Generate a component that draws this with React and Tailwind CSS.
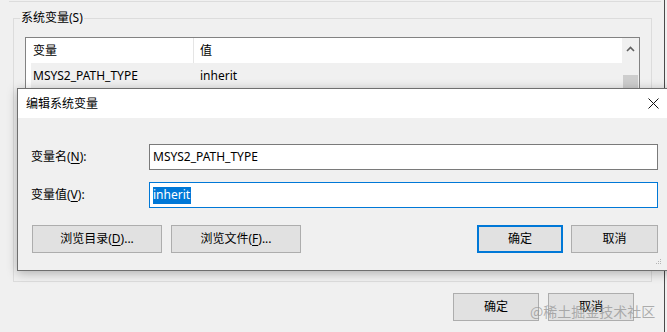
import React from "react";

const font = { fontFamily: '"Noto Sans", "Noto Sans CJK SC", sans-serif' };

const WinButton = ({ children, primary, className = "" }) => (
  <div
    className={`flex h-[28px] items-center justify-center bg-[#e1e1e1] text-[12px] text-black ${
      primary ? "border-2 border-[#0078d7]" : "border border-[#adadad]"
    } ${className}`}
  >
    {children}
  </div>
);

const Grip = () => (
  <svg width="6" height="6" viewBox="0 0 6 6" className="absolute bottom-[2px] right-[2px]">
    <rect x="4" y="0" width="1" height="1" fill="#b4b4b4" />
    <rect x="2" y="2" width="1" height="1" fill="#b4b4b4" />
    <rect x="4" y="2" width="1" height="1" fill="#b4b4b4" />
    <rect x="0" y="4" width="1" height="1" fill="#b4b4b4" />
    <rect x="2" y="4" width="1" height="1" fill="#b4b4b4" />
    <rect x="4" y="4" width="1" height="1" fill="#b4b4b4" />
  </svg>
);

export default function App() {
  return (
    <div className="relative h-[332px] w-[667px] overflow-hidden bg-[#f0f0f0] text-[12px] leading-none text-black" style={font}>
      {/* background window */}
      <div className="flex flex-col">
        <div className="ml-[9px] mt-[1px] h-px w-[652px] bg-[#dcdcdc]" />

        {/* 系统变量 group */}
        <div className="relative ml-[13px] mt-[16px] h-[264px] w-[639px] border border-[#dcdcdc]">
          <span className="absolute left-[6px] top-[-7px] bg-[#f0f0f0] px-[1px]">系统变量(S)</span>

          <div className="ml-[11px] mt-[18px] flex h-[200px] w-[615px] border border-[#828282] bg-white">
            <div className="flex flex-1 flex-col">
              <div className="flex h-[25px] items-center">
                <div className="flex h-full w-[168px] items-center border-r border-[#e5e5e5] pl-[7px]">变量</div>
                <div className="pl-[6px]">值</div>
              </div>
              <div className="ml-[5px] flex h-[25px] items-center bg-[#f0f0f0]">
                <div className="w-[168px] pl-[2px]">MSYS2_PATH_TYPE</div>
                <div className="pl-[1px]">inherit</div>
              </div>
            </div>
            <div className="flex w-[17px] flex-col items-center bg-[#f0f0f0]">
              <svg width="9" height="6" viewBox="0 0 9 6" className="mt-[8px]">
                <path d="M1 5 L4.5 1.5 L8 5" fill="none" stroke="#606060" strokeWidth="1.6" />
              </svg>
              <div className="mt-[23px] h-[60px] w-[15px] bg-[#cdcdcd]" />
            </div>
          </div>
        </div>

        <div className="mr-[33px] mt-[11px] flex justify-end gap-[9px]">
          <WinButton className="w-[86px]">确定</WinButton>
          <WinButton className="w-[86px]">取消</WinButton>
        </div>
      </div>

      <div className="absolute left-[664px] top-0 h-full w-px bg-[#4a4a4a]" />

      {/* 编辑系统变量 dialog */}
      <div className="absolute left-[17px] top-[88px] flex h-[183px] w-[662px] flex-col border border-[#6f6f6f] bg-[#f0f0f0] shadow-[0_2px_10px_rgba(0,0,0,0.28)]">
        <div className="flex h-[29px] items-center justify-between bg-white pl-[8px]">
          <span>编辑系统变量</span>
          <svg width="11" height="11" viewBox="0 0 11 11" className="mr-[19px]">
            <path d="M0.5 0.5 L10.5 10.5 M10.5 0.5 L0.5 10.5" stroke="#111" strokeWidth="1" />
          </svg>
        </div>

        <div className="relative flex flex-1 flex-col px-[13px] pt-[26px]">
          <div className="flex items-center">
            <span className="w-[118px]">
              变量名(<span className="underline underline-offset-2">N</span>):
            </span>
            <div className="flex h-[26px] w-[509px] items-center border border-[#7a7a7a] bg-white pl-[3px]">
              MSYS2_PATH_TYPE
            </div>
          </div>
          <div className="mt-[12px] flex items-center">
            <span className="w-[118px]">
              变量值(<span className="underline underline-offset-2">V</span>):
            </span>
            <div className="flex h-[26px] w-[509px] items-center border border-[#0078d7] bg-white pl-[3px]">
              <span className="flex h-[17px] items-center bg-[#0078d7] pr-[1px] text-white">inherit</span>
            </div>
          </div>

          <div className="mt-[17px] flex">
            <WinButton className="ml-[1px] w-[130px]">
              浏览目录(<span className="underline underline-offset-2">D</span>)...
            </WinButton>
            <WinButton className="ml-[9px] w-[130px]">
              浏览文件(<span className="underline underline-offset-2">F</span>)...
            </WinButton>
            <WinButton primary className="ml-[176px] w-[86px]">确定</WinButton>
            <WinButton className="ml-[8px] w-[87px]">取消</WinButton>
          </div>
          <div className="absolute bottom-[3px] left-[638px] h-[8px] w-[8px]">
            <Grip />
          </div>
        </div>
      </div>

      {/* watermark */}
      <div
        className="pointer-events-none absolute left-[530px] top-[304px] text-[14px] leading-none text-[rgba(150,150,150,0.75)]"
        style={{ fontFamily: '"Noto Sans CJK SC", sans-serif' }}
      >
        @稀土掘金技术社区
      </div>
    </div>
  );
}
